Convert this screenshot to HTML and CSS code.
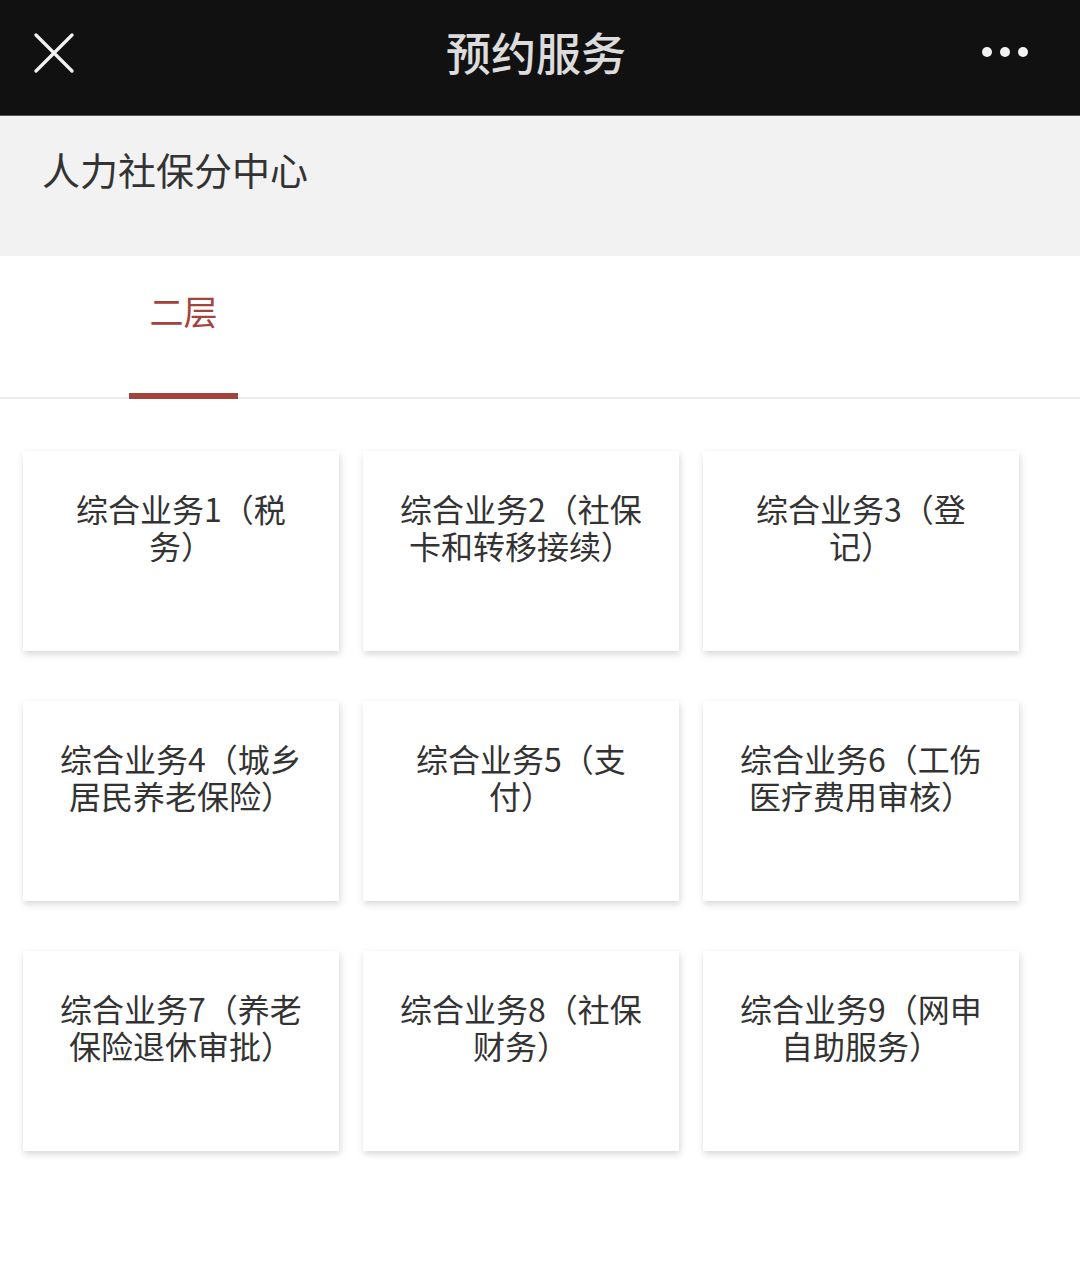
FILE: index.html
```html
<!DOCTYPE html>
<html lang="zh-CN">
<head>
<meta charset="utf-8">
<title>预约服务</title>
<link rel="stylesheet" href="styles.css">
</head>
<body>
<header class="topbar">
  <span class="close-btn" aria-label="关闭">
    <svg width="40" height="40" viewBox="0 0 40 40"><path d="M2 2 L38 38 M38 2 L2 38" stroke="#f2f2f2" stroke-width="3.2" stroke-linecap="round" fill="none"/></svg>
  </span>
  <h1 class="topbar-title">预约服务</h1>
  <span class="more-btn" aria-label="更多"><i></i><i></i><i></i></span>
</header>
<section class="center-head">
  <h2 class="center-name">人力社保分中心</h2>
</section>
<nav class="tabs">
  <div class="tab tab-active">二层</div>
</nav>
<main class="grid">
  <div class="card"><p class="card-text">综合业务1（税务）</p></div>
  <div class="card"><p class="card-text">综合业务2（社保卡和转移接续）</p></div>
  <div class="card"><p class="card-text">综合业务3（登记）</p></div>
  <div class="card"><p class="card-text">综合业务4（城乡居民养老保险）</p></div>
  <div class="card"><p class="card-text">综合业务5（支付）</p></div>
  <div class="card"><p class="card-text">综合业务6（工伤医疗费用审核）</p></div>
  <div class="card"><p class="card-text">综合业务7（养老保险退休审批）</p></div>
  <div class="card"><p class="card-text">综合业务8（社保财务）</p></div>
  <div class="card"><p class="card-text">综合业务9（网申自助服务）</p></div>
</main>
</body>
</html>
```
FILE: styles.css
```css
* { box-sizing: border-box; }
html, body { margin: 0; padding: 0; }
body {
  background: #ffffff;
  font-family: "Noto Sans CJK SC", "Noto Sans", sans-serif;
  color: #333333;
  width: 1080px;
  text-spacing-trim: space-all;
}
.topbar {
  height: 116px;
  background: #111111;
  display: flex;
  align-items: center;
  justify-content: space-between;
  padding: 0 50px 0 34px;
  border-bottom: 1px solid #555;
}
.close-btn {
  width: 40px;
  height: 40px;
  display: flex;
  position: relative;
  top: -5px;
}
.topbar-title {
  margin: 0;
  font-size: 45px;
  font-weight: 500;
  color: #dcdcdc;
  line-height: 1;
  position: relative;
  left: 8px;
  top: -6px;
}
.more-btn {
  display: flex;
  gap: 8px;
  width: 48px;
  position: relative;
  top: -6px;
}
.more-btn i {
  display: block;
  width: 10px;
  height: 10px;
  border-radius: 50%;
  background: #f2f2f2;
}
.center-head {
  height: 140px;
  background: #f2f2f2;
  padding: 28px 0 0 42px;
}
.center-name {
  margin: 0;
  font-size: 38px;
  font-weight: 400;
  color: #333333;
  line-height: 50px;
}
.tabs {
  height: 143px;
  border-bottom: 2px solid #ebebeb;
  display: flex;
  padding-left: 129px;
}
.tab {
  width: 109px;
  text-align: center;
  font-size: 34px;
  line-height: 40px;
  padding-top: 35px;
  color: #a3433b;
}
.tab-active {
  border-bottom: 6px solid #a3433b;
  margin-bottom: -2px;
}
.grid {
  display: grid;
  grid-template-columns: repeat(3, 316px);
  grid-auto-rows: 200px;
  column-gap: 24px;
  row-gap: 50px;
  padding: 52px 0 40px 23px;
}
.card {
  background: #ffffff;
  box-shadow: 1px 3px 7px rgba(0, 0, 0, 0.16);
  padding: 39px 22px 0;
}
.card-text {
  margin: 0;
  text-align: center;
  font-size: 32px;
  line-height: 37px;
  color: #333333;
}
```
